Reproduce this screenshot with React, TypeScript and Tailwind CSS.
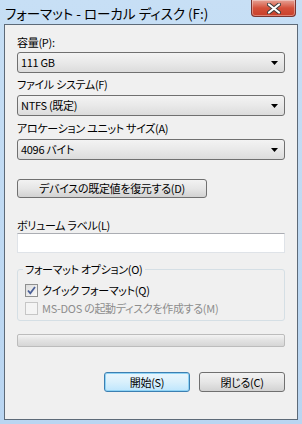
import React from 'react';

const jp = "font-['Noto_Sans_CJK_JP','Noto_Sans',sans-serif] [font-feature-settings:'palt']";

function Combo({ value }: { value: string }) {
  return (
    <div className="flex h-[21px] items-center justify-between rounded-[3px] border border-[#707070] bg-gradient-to-b from-[#f3f3f3] via-[#e9e9e9] to-[#dcdcdc] pl-[3px] pr-[6px] text-[11px] leading-none tracking-[-0.3px] text-black">
      <span>{value}</span>
      <svg width="7" height="4" viewBox="0 0 7 4">
        <path d="M0 0h7L3.5 4z" fill="#000" />
      </svg>
    </div>
  );
}

function Label({ text, className = '' }: { text: string; className?: string }) {
  return <div className={`h-[16px] text-[11px] leading-[16px] tracking-[-0.3px] text-black ${className}`}>{text}</div>;
}

export default function App() {
  return (
    <div className={`flex h-[424px] w-[302px] flex-col bg-gradient-to-b from-[#c7dff5] to-[#b9d5f1] ${jp}`}>
      {/* title bar */}
      <div className="flex h-[24px] items-start justify-between pl-[5px] pr-[6px]">
        <div className="pt-[5px] text-[13.5px] leading-[16px] text-black">フォーマット - ローカル ディスク (F:)</div>
        <div className="flex h-[17px] w-[45px] items-center justify-center rounded-b-[4px] border border-t-0 border-[#7a3530] bg-gradient-to-b from-[#e5a195] via-[#d4503a] to-[#c9402a] shadow-[inset_0_0_0_1px_rgba(255,255,255,0.35)]">
          <svg width="14" height="11" viewBox="0 0 14 11">
            <path d="M2 1.5l10 8M12 1.5l-10 8" stroke="#3d3d3d" strokeWidth="4" strokeLinecap="round" />
            <path d="M2 1.5l10 8M12 1.5l-10 8" stroke="#fff" strokeWidth="2.2" strokeLinecap="round" />
          </svg>
        </div>
      </div>

      {/* client area */}
      <div className="mx-[4px] mb-[4px] flex flex-1 flex-col border border-[#5d6a78] bg-[#f0f0f0] px-[12px] pt-[9px]">
        <Label text="容量(P):" />
        <div className="mt-[2px]">
          <Combo value="111 GB" />
        </div>

        <Label text="ファイル システム(F)" className="mt-[3px]" />
        <div className="mt-[3px]">
          <Combo value="NTFS (既定)" />
        </div>

        <Label text="アロケーション ユニット サイズ(A)" className="mt-[4px]" />
        <div className="mt-[3px]">
          <Combo value="4096 バイト" />
        </div>

        <button className="mt-[19px] flex h-[19px] w-[190px] items-center justify-center rounded-[3px] border border-[#707070] bg-gradient-to-b from-[#f2f2f2] via-[#e6e6e6] to-[#d2d2d2] text-[11px] leading-none tracking-[-0.3px] text-black">
          デバイスの既定値を復元する(D)
        </button>

        <Label text="ボリューム ラベル(L)" className="mt-[19px]" />
        <div className="h-[20px] border border-[#dfe3e8] border-t-[#abadb3] bg-white" />

        {/* group box */}
        <div className="relative mt-[16px] h-[52px] rounded-[3px] border border-[#d5dfe5]">
          <div className="absolute -top-[9px] left-[5px] bg-[#f0f0f0] px-[2px] text-[11px] leading-[16px] tracking-[-0.3px] text-black">
            フォーマット オプション(O)
          </div>
          <div className="mt-[12px] flex items-center pl-[7px]">
            <div className="flex h-[13px] w-[13px] items-center justify-center border border-[#8e8f8f] bg-gradient-to-br from-[#dcdcdc] to-[#f8f8f8]">
              <svg width="9" height="9" viewBox="0 0 9 9">
                <path d="M1 4.5l2.3 2.8L8 1" stroke="#4a5f97" strokeWidth="1.8" fill="none" />
              </svg>
            </div>
            <span className="ml-[4px] text-[11px] leading-[16px] tracking-[-0.3px] text-black">クイック フォーマット(Q)</span>
          </div>
          <div className="mt-[2px] flex items-center pl-[7px]">
            <div className="h-[13px] w-[13px] border border-[#c6c6c6] bg-[#f4f4f4]" />
            <span className="ml-[4px] text-[11px] leading-[16px] tracking-[-0.3px] text-[#8d8d8d]">MS-DOS の起動ディスクを作成する(M)</span>
          </div>
        </div>

        {/* progress bar */}
        <div className="mt-[13px] h-[13px] rounded-[2px] border border-[#bcbcbc] bg-gradient-to-b from-[#f3f3f3] via-[#e2e2e2] to-[#d6d6d6]" />

        {/* buttons */}
        <div className="mt-[25px] flex justify-end gap-[9px]">
          <button className="flex h-[20px] w-[86px] items-center justify-center rounded-[3px] border border-[#3c7fb1] bg-gradient-to-b from-[#eaf6fd] via-[#d9f0fc] to-[#bee6fd] text-[11px] leading-none tracking-[-0.3px] text-black shadow-[inset_0_0_0_1px_#8fd3f5]">
            開始(S)
          </button>
          <button className="flex h-[20px] w-[86px] items-center justify-center rounded-[3px] border border-[#707070] bg-gradient-to-b from-[#f2f2f2] via-[#e6e6e6] to-[#d2d2d2] text-[11px] leading-none tracking-[-0.3px] text-black">
            閉じる(C)
          </button>
        </div>
      </div>
    </div>
  );
}
